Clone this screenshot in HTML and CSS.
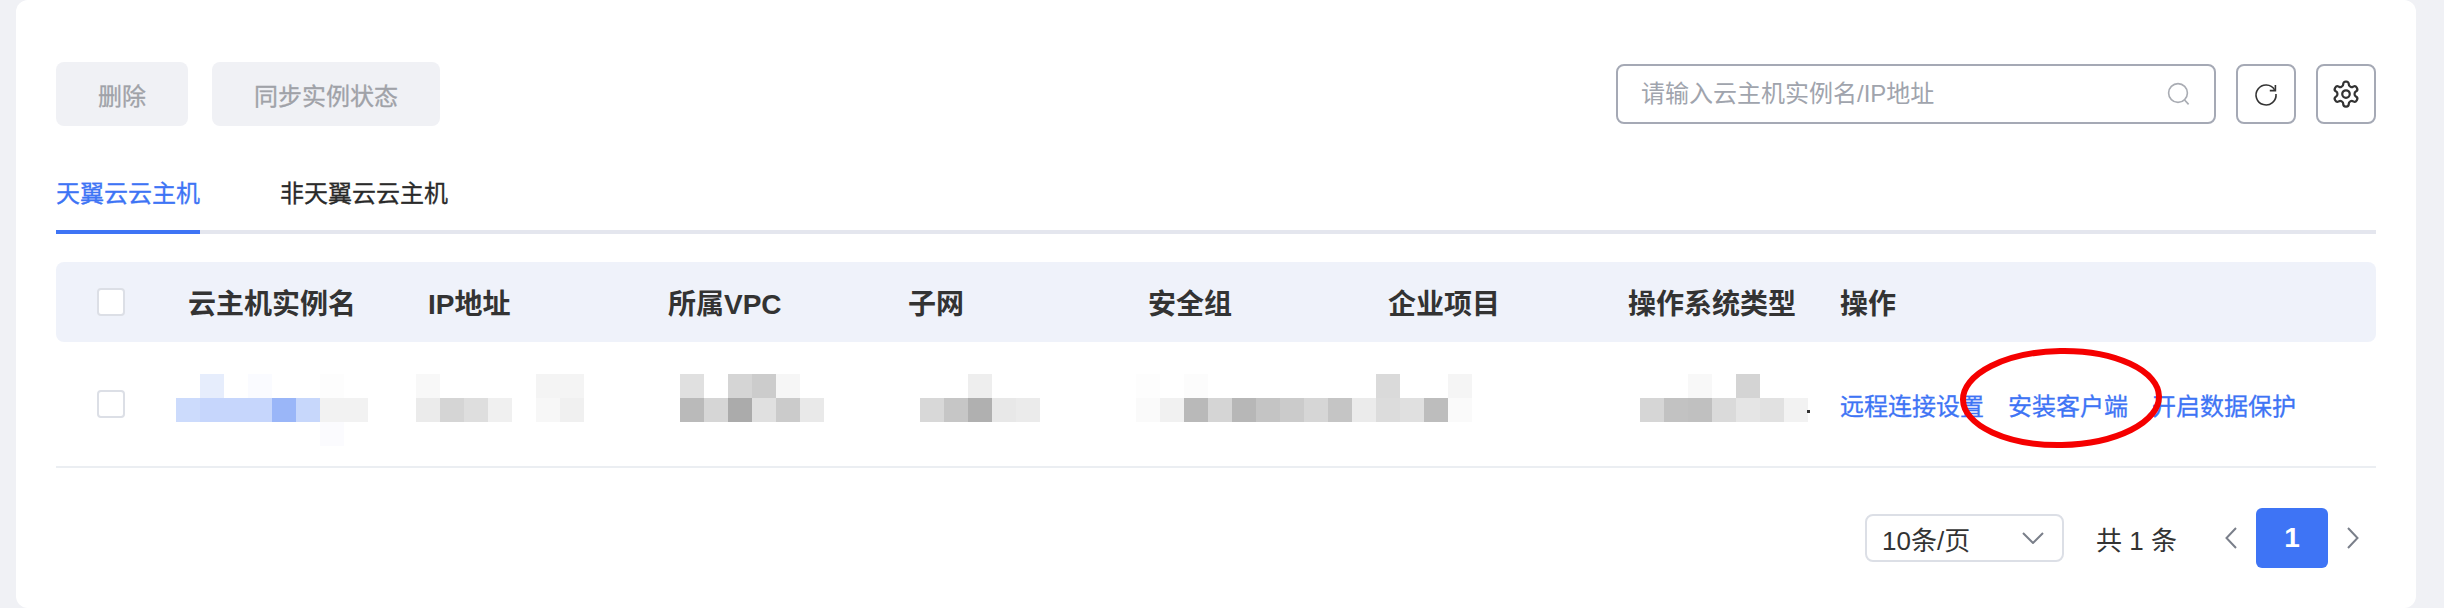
FILE: index.html
```html
<!DOCTYPE html>
<html lang="zh-CN">
<head>
  <meta charset="UTF-8" />
  <title>云主机实例</title>
  <link rel="stylesheet" href="styles.css">
</head>
<body>
  <div class="card">

    <div class="toolbar">
      <button class="btn">删除</button>
      <button class="btn btn-sync">同步实例状态</button>
      <div class="search">
        <input type="text" placeholder="请输入云主机实例名/IP地址" />
        <svg class="search-icon" width="26" height="26" viewBox="0 0 26 26" fill="none" stroke="#a9acb3" stroke-width="1.6">
          <circle cx="12" cy="12" r="9.4"/>
          <path d="M18.6 19l4 4.4"/>
        </svg>
      </div>
      <button class="btn-icon">
        <svg width="28" height="28" viewBox="0 0 28 28" fill="none" stroke="#333" stroke-width="1.6">
          <path d="M22.600 9.800A10 10 0 1 0 24 14"/>
          <path d="M23.400 5v5.600h-5.600"/>
        </svg>
      </button>
      <button class="btn-icon">
        <svg width="30" height="30" viewBox="0 0 24 24" fill="none" stroke="#333" stroke-width="1.800" stroke-linejoin="round">
          <path d="M12.220 2h-.44a2 2 0 0 0-2 2v.18a2 2 0 0 1-1 1.730l-.43.25a2 2 0 0 1-2 0l-.15-.08a2 2 0 0 0-2.730.73l-.22.38a2 2 0 0 0 .73 2.730l.15.1a2 2 0 0 1 1 1.720v.51a2 2 0 0 1-1 1.740l-.15.09a2 2 0 0 0-.73 2.730l.22.38a2 2 0 0 0 2.730.73l.15-.08a2 2 0 0 1 2 0l.43.25a2 2 0 0 1 1 1.730V20a2 2 0 0 0 2 2h.44a2 2 0 0 0 2-2v-.18a2 2 0 0 1 1-1.730l.43-.25a2 2 0 0 1 2 0l.15.08a2 2 0 0 0 2.730-.73l.22-.39a2 2 0 0 0-.73-2.730l-.15-.08a2 2 0 0 1-1-1.740v-.5a2 2 0 0 1 1-1.740l.15-.09a2 2 0 0 0 .73-2.730l-.22-.38a2 2 0 0 0-2.730-.73l-.15.08a2 2 0 0 1-2 0l-.43-.25a2 2 0 0 1-1-1.730V4a2 2 0 0 0-2-2z"/>
          <circle cx="12" cy="12" r="3"/>
        </svg>
      </button>
    </div>

    <div class="tabs">
      <div class="tab tab-active">天翼云云主机</div>
      <div class="tab">非天翼云云主机</div>
    </div>

    <div class="table-head">
      <div class="cell-check"><span class="checkbox"></span></div>
      <div>云主机实例名</div>
      <div>IP地址</div>
      <div>所属VPC</div>
      <div>子网</div>
      <div>安全组</div>
      <div>企业项目</div>
      <div>操作系统类型</div>
      <div>操作</div>
    </div>

    <div class="table-row">
      <div class="cell-check"><span class="checkbox"></span></div>

      <div>
        <svg class="mosaic shift-left" width="192" height="72" shape-rendering="crispEdges">
          <rect x="24" y="0" width="24" height="24" fill="#e6edfc"/>
          <rect x="72" y="0" width="24" height="24" fill="#fafbff"/>
          <rect x="144" y="0" width="24" height="24" fill="#fdfdfd"/>
          <rect x="0" y="24" width="24" height="24" fill="#ccdbfc"/>
          <rect x="24" y="24" width="72" height="24" fill="#c6d6fc"/>
          <rect x="96" y="24" width="24" height="24" fill="#9ab6f8"/>
          <rect x="120" y="24" width="24" height="24" fill="#c7d7fb"/>
          <rect x="144" y="24" width="48" height="24" fill="#f2f2f2"/>
          <rect x="144" y="48" width="24" height="24" fill="#fbfbfe"/>
        </svg>
      </div>

      <div>
        <svg class="mosaic shift-left" width="168" height="72" shape-rendering="crispEdges">
          <rect x="0" y="0" width="24" height="24" fill="#f8f8f8"/>
          <rect x="120" y="0" width="48" height="24" fill="#f4f4f4"/>
          <rect x="0" y="24" width="24" height="24" fill="#ebebeb"/>
          <rect x="24" y="24" width="24" height="24" fill="#d5d5d5"/>
          <rect x="48" y="24" width="24" height="24" fill="#dedede"/>
          <rect x="72" y="24" width="24" height="24" fill="#f0f0f0"/>
          <rect x="120" y="24" width="24" height="24" fill="#f7f7f7"/>
          <rect x="144" y="24" width="24" height="24" fill="#f0f0f0"/>
        </svg>
      </div>

      <div>
        <svg class="mosaic shift-right" width="144" height="72" shape-rendering="crispEdges">
          <rect x="0" y="0" width="24" height="24" fill="#e0e0e0"/>
          <rect x="48" y="0" width="24" height="24" fill="#d5d5d5"/>
          <rect x="72" y="0" width="24" height="24" fill="#cccccc"/>
          <rect x="96" y="0" width="24" height="24" fill="#f6f6f6"/>
          <rect x="0" y="24" width="24" height="24" fill="#bababa"/>
          <rect x="24" y="24" width="24" height="24" fill="#d6d6d6"/>
          <rect x="48" y="24" width="24" height="24" fill="#ababab"/>
          <rect x="72" y="24" width="24" height="24" fill="#e0e0e0"/>
          <rect x="96" y="24" width="24" height="24" fill="#cbcbcb"/>
          <rect x="120" y="24" width="24" height="24" fill="#e9e9e9"/>
        </svg>
      </div>

      <div>
        <svg class="mosaic shift-right" width="120" height="72" shape-rendering="crispEdges">
          <rect x="48" y="0" width="24" height="24" fill="#eeeeee"/>
          <rect x="0" y="24" width="24" height="24" fill="#d8d8d8"/>
          <rect x="24" y="24" width="24" height="24" fill="#c6c6c6"/>
          <rect x="48" y="24" width="24" height="24" fill="#b0b0b0"/>
          <rect x="72" y="24" width="24" height="24" fill="#e8e8e8"/>
          <rect x="96" y="24" width="24" height="24" fill="#ebebeb"/>
        </svg>
      </div>

      <div>
        <svg class="mosaic shift-left" width="336" height="72" shape-rendering="crispEdges">
          <rect x="0" y="0" width="24" height="24" fill="#fdfdfd"/>
          <rect x="48" y="0" width="24" height="24" fill="#fcfcfc"/>
          <rect x="240" y="0" width="24" height="24" fill="#dadada"/>
          <rect x="312" y="0" width="24" height="24" fill="#f5f5f5"/>
          <rect x="0" y="24" width="24" height="24" fill="#fafafa"/>
          <rect x="24" y="24" width="24" height="24" fill="#f1f1f1"/>
          <rect x="48" y="24" width="24" height="24" fill="#b9b9b9"/>
          <rect x="72" y="24" width="24" height="24" fill="#d5d5d5"/>
          <rect x="96" y="24" width="24" height="24" fill="#b7b7b7"/>
          <rect x="120" y="24" width="24" height="24" fill="#c4c4c4"/>
          <rect x="144" y="24" width="24" height="24" fill="#cbcbcb"/>
          <rect x="168" y="24" width="24" height="24" fill="#d6d6d6"/>
          <rect x="192" y="24" width="24" height="24" fill="#c5c5c5"/>
          <rect x="216" y="24" width="24" height="24" fill="#ebebeb"/>
          <rect x="240" y="24" width="24" height="24" fill="#dcdcdc"/>
          <rect x="264" y="24" width="24" height="24" fill="#e0e0e0"/>
          <rect x="288" y="24" width="24" height="24" fill="#bdbdbd"/>
          <rect x="312" y="24" width="24" height="24" fill="#fafafa"/>
        </svg>
      </div>

      <div></div>

      <div>
        <svg class="mosaic shift-right" width="170" height="72" shape-rendering="crispEdges">
          <rect x="48" y="0" width="24" height="24" fill="#f8f8f8"/>
          <rect x="96" y="0" width="24" height="24" fill="#d4d4d4"/>
          <rect x="0" y="24" width="24" height="24" fill="#d6d6d6"/>
          <rect x="24" y="24" width="24" height="24" fill="#c2c2c2"/>
          <rect x="48" y="24" width="24" height="24" fill="#c0c0c0"/>
          <rect x="72" y="24" width="24" height="24" fill="#dadada"/>
          <rect x="96" y="24" width="24" height="24" fill="#e5e5e5"/>
          <rect x="120" y="24" width="24" height="24" fill="#e1e1e1"/>
          <rect x="144" y="24" width="24" height="24" fill="#f2f2f2"/>
          <rect x="167" y="36" width="3" height="3" fill="#333333"/>
        </svg>
      </div>

      <div class="actions">
        <a class="link">远程连接设置</a>
        <a class="link link-marked">安装客户端
          <svg class="marker" width="212" height="110" viewBox="0 0 212 110" fill="none" stroke="#f50000" stroke-width="6">
            <ellipse cx="106" cy="55" rx="98" ry="47" transform="rotate(-1 106 55)"/>
          </svg>
        </a>
        <a class="link">开启数据保护</a>
      </div>
    </div>

    <div class="pager">
      <div class="size-select">
        <span>10条/页</span>
        <svg width="22" height="12" viewBox="0 0 22 12" fill="none" stroke="#7a7f8a" stroke-width="2"><path d="M1 1l10 10L21 1"/></svg>
      </div>
      <span class="total">共 1 条</span>
      <svg class="page-arrow" width="12" height="22" viewBox="0 0 12 22" fill="none" stroke="#7a7f8a" stroke-width="2"><path d="M11 1L1.500 11 11 21"/></svg>
      <span class="page-num">1</span>
      <svg class="page-arrow" width="12" height="22" viewBox="0 0 12 22" fill="none" stroke="#7a7f8a" stroke-width="2"><path d="M1 1l9.500 10L1 21"/></svg>
    </div>

  </div>
</body>
</html>
```

FILE: styles.css
```css
* {
  box-sizing: border-box;
}
body {
  margin: 0;
  height: 608px;
  overflow: hidden;
  background-color: #f0f1f5;
  font-family: "Liberation Sans", "Noto Sans CJK SC", sans-serif;
  color: #333;
}
.card {
  height: 608px;
  margin: 0 28px 0 16px;
  padding: 62px 40px 0;
  background-color: #fff;
  border-radius: 12px;
}

/* toolbar */
.toolbar {
  display: flex;
  align-items: center;
  height: 64px;
}
.btn {
  width: 132px;
  height: 64px;
  margin-right: 24px;
  border: none;
  border-radius: 8px;
  background-color: #f0f1f5;
  color: #a0a2a8;
  font-family: inherit;
  font-size: 24px;
  -webkit-text-stroke: 0.3px;
}
.btn-sync {
  width: 228px;
}
.search {
  display: flex;
  align-items: center;
  width: 600px;
  height: 60px;
  margin-left: auto;
  padding: 0 22px 0 23px;
  border: 2px solid #a5a9b5;
  border-radius: 8px;
}
.search input {
  flex: 1;
  min-width: 0;
  border: none;
  outline: none;
  padding: 0;
  font-family: inherit;
  font-size: 24px;
}
.search input::placeholder {
  color: #a0a4ad;
  opacity: 1;
}
.btn-icon {
  display: flex;
  align-items: center;
  justify-content: center;
  width: 60px;
  height: 60px;
  margin-left: 20px;
  padding: 0;
  border: 2px solid #a5a9b5;
  border-radius: 8px;
  background-color: #fff;
}

/* tabs */
.tabs {
  display: flex;
  gap: 80px;
  height: 108px;
  border-bottom: 4px solid #e4e6ee;
}
.tab {
  height: 108px;
  padding-top: 50px;
  font-size: 24px;
  line-height: 36px;
  color: #2a2a2a;
  -webkit-text-stroke: 0.3px;
}
.tab-active {
  color: #3e74f5;
  border-bottom: 4px solid #3e74f5;
}

/* table */
.table-head,
.table-row {
  display: grid;
  grid-template-columns: 132px 240px 240px 240px 240px 240px 240px 212px 1fr;
  align-items: center;
}
.table-head {
  height: 80px;
  margin-top: 28px;
  border-radius: 8px;
  background-color: #eff2fa;
  font-size: 28px;
  font-weight: 700;
  color: #333;
}
.table-row {
  height: 126px;
  border-bottom: 2px solid #ebeef2;
}
.cell-check {
  padding-left: 41px;
}
.checkbox {
  display: block;
  width: 28px;
  height: 28px;
  border: 2px solid #dcdfe6;
  border-radius: 4px;
  background-color: #fff;
}
.mosaic {
  display: block;
  margin-top: 12px;
}
.shift-left {
  margin-left: -12px;
}
.shift-right {
  margin-left: 12px;
}
.actions {
  display: flex;
  gap: 24px;
  white-space: nowrap;
  margin-top: 1px;
}
.link {
  font-size: 24px;
  color: #3e74f5;
  -webkit-text-stroke: 0.3px;
}
.link-marked {
  position: relative;
}
.marker {
  position: absolute;
  left: -53px;
  top: -44px;
}

/* pagination */
.pager {
  display: flex;
  align-items: center;
  justify-content: flex-end;
  height: 60px;
  margin-top: 40px;
  padding-right: 17px;
}
.size-select {
  display: flex;
  align-items: center;
  justify-content: space-between;
  width: 199px;
  height: 48px;
  padding: 0 18px 0 15px;
  border: 2px solid #dcdfe6;
  border-radius: 8px;
  font-size: 26px;
}
.total {
  margin-left: 32px;
  margin-right: 48px;
  font-size: 26px;
}
.page-num {
  width: 72px;
  height: 60px;
  margin: 0 19px;
  border-radius: 6px;
  background-color: #3e74f5;
  color: #fff;
  font-size: 28px;
  font-weight: 700;
  line-height: 60px;
  text-align: center;
}
```
